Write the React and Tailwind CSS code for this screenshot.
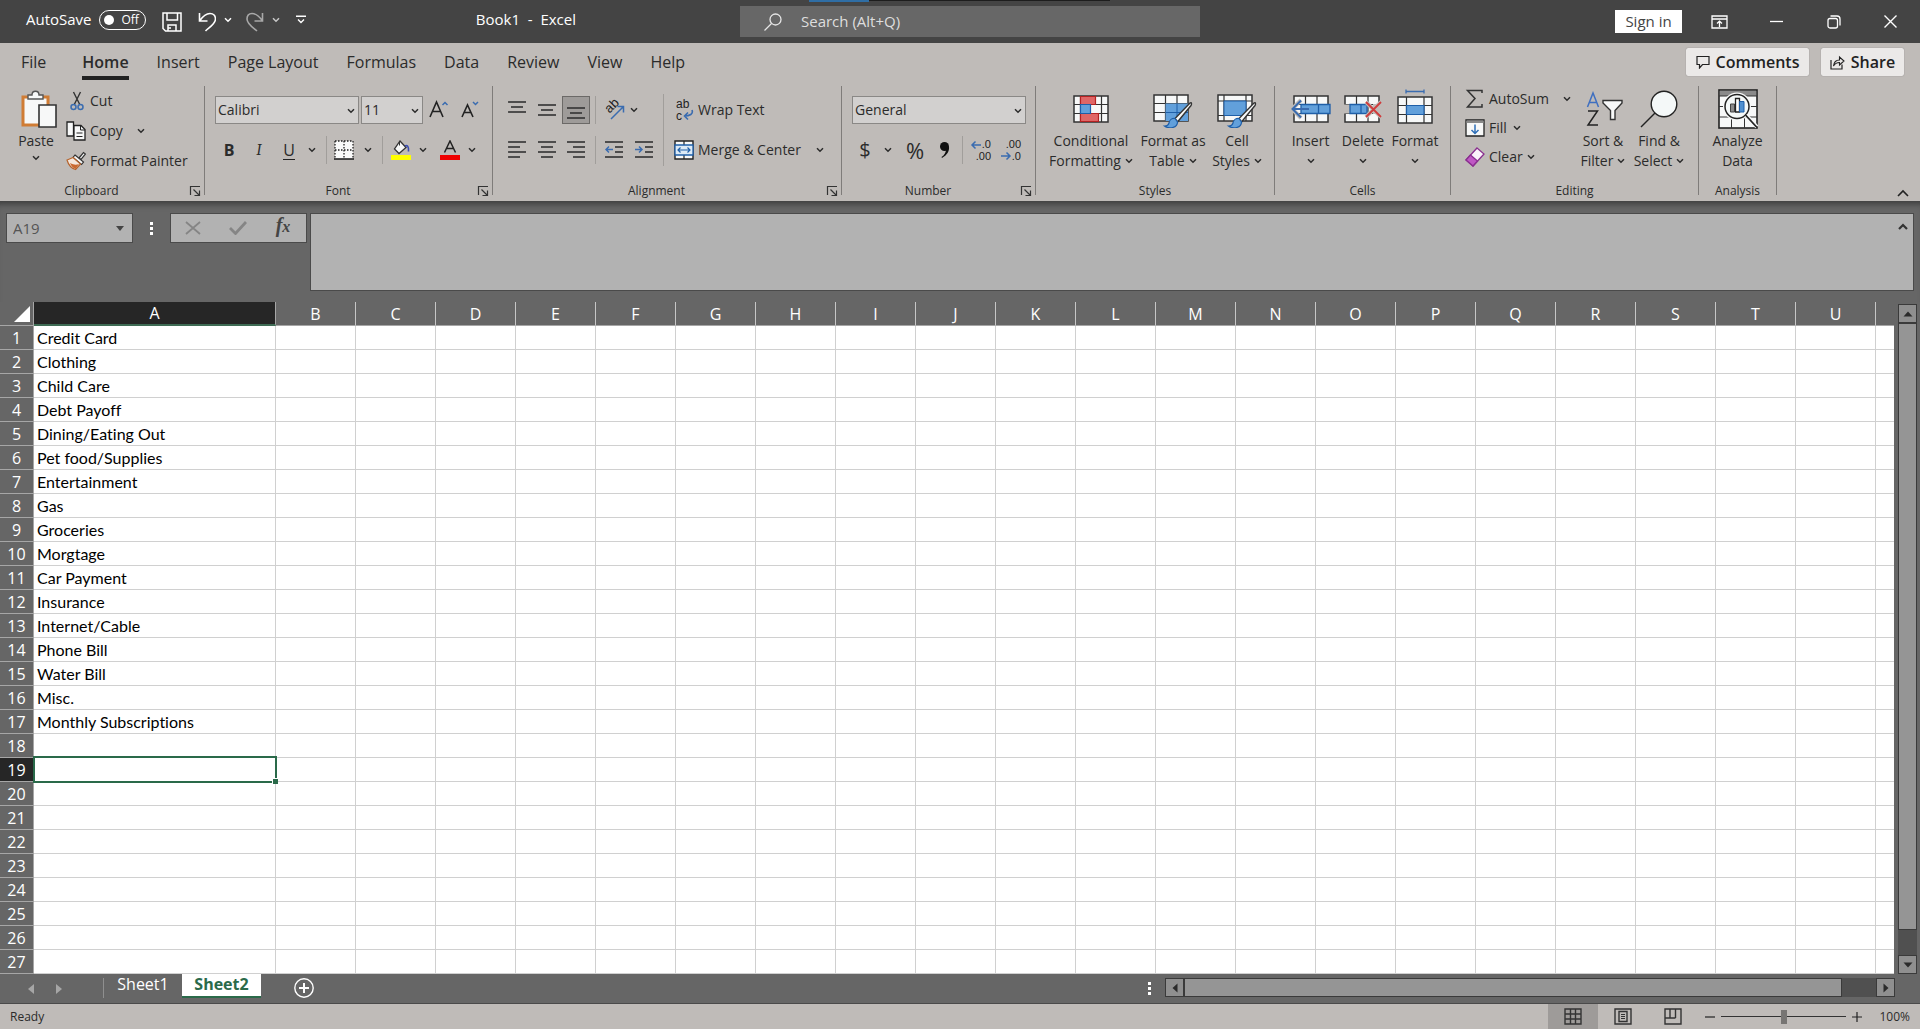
import React from "react";

const expenses = [
  "Credit Card", "Clothing", "Child Care", "Debt Payoff", "Dining/Eating Out", "Pet food/Supplies",
  "Entertainment", "Gas", "Groceries", "Morgtage", "Car Payment", "Insurance", "Internet/Cable",
  "Phone Bill", "Water Bill", "Misc.", "Monthly Subscriptions",
];
const columns = "BCDEFGHIJKLMNOPQRSTU".split("");
const rows = Array.from({ length: 27 }, (_, i) => i + 1);

function Svg({ w, h, children, className = "" }) {
  return (
    <svg width={w} height={h} viewBox={`0 0 ${w} ${h}`} fill="none" aria-hidden="true" className={`shrink-0 ${className}`}>
      {children}
    </svg>
  );
}

function Chevron({ className = "" }) {
  return (
    <Svg w={8} h={6} className={className}>
      <path d="M1 1.2 4 4.2 7 1.2" stroke="currentColor" strokeWidth="1.5" />
    </Svg>
  );
}

function IconButton({ label, className = "w-[30px]", children }) {
  return (
    <button type="button" aria-label={label} className={`flex h-7 shrink-0 items-center justify-center ${className}`}>
      {children}
    </button>
  );
}

function Separator({ className = "h-7" }) {
  return <div className={`w-px shrink-0 bg-[#a19e9b] ${className}`} />;
}

function Group({ name, launcher, width, children }) {
  return (
    <section aria-label={name} className={`flex shrink-0 ${width}`}>
      <div className="flex min-w-0 flex-1 flex-col">
        <div className="h-[95px]">{children}</div>
        <div className="flex h-5 items-center">
          <span className={`flex-1 text-center text-xs ${launcher ? "pr-1.5" : ""}`}>{name}</span>
          {launcher && (
            <button type="button" aria-label={`${name} settings`} className="mr-[3px] flex w-3 items-center">
              <Svg w={12} h={12}>
                <path d="M1.5 10V1.5H11M4.5 4.5l6 6M10.5 5.5v5h-5" stroke="#333" strokeWidth="1.2" />
              </Svg>
            </button>
          )}
        </div>
      </div>
      <div className="h-[109px] w-px bg-[#7f7c7a]" />
    </section>
  );
}

function BigButton({ icon, first, second, width, chevron = true }) {
  return (
    <button type="button" className={`flex shrink-0 flex-col items-center text-sm leading-5 ${width}`}>
      <span className="flex h-[45px] items-center justify-center">{icon}</span>
      <span className="whitespace-nowrap">{first}</span>
      <span className="flex h-5 items-center gap-1">
        {second}
        {chevron && <Chevron />}
      </span>
    </button>
  );
}

/* Horizontal text lines, each given as [x1, x2, y] */
function Lines({ lines, color = "#333" }) {
  return lines.map(([a, b, y]) => <path key={y} d={`M${a} ${y}H${b}`} stroke={color} strokeWidth="1.6" />);
}

const grid = (
  <>
    <rect x="1" y="1" width="34" height="26" fill="#f7f8f8" stroke="#333" strokeWidth="1.5" />
    <path d="M12.5 1v26M24 1v26M1 9.500h34M1 18.500h34" stroke="#333" strokeWidth="1.200" />
  </>
);

const brush = (
  <>
    <path d="M37 9 22 24.500l2.500 3.500L38 11.500c1-1.500.5-3.500-1-2.500Z" fill="#f7f8f8" stroke="#333" strokeWidth="1.4" />
    <path d="M22 24.500c-3-.5-5.500 1.500-6 4.500-.5 2-2 3-4.500 3 4 3 13 2.500 13-4Z" fill="#62a0db" stroke="#1f5fa8" strokeWidth="1.2" />
  </>
);

const conditionalIcon = (
  <Svg w={36} h={28}>
    <rect x="1" y="1" width="34" height="26" fill="#f7f8f8" stroke="#333" strokeWidth="1.500" />
    <path d="M7.500 1v26M28.500 1v26M1 9.500h34M1 18.500h34" stroke="#333" strokeWidth="1.200" />
    <path d="M7.500 1.500h15v8h-15zM7.500 18.500h18v8h-18z" fill="#e06666" stroke="#b32222" strokeWidth="1.2" />
    <path d="M7.500 9.500h10v9h-10z" fill="#62a0db" stroke="#1f5fa8" strokeWidth="1.2" />
  </Svg>
);
const tableStyleIcon = (
  <Svg w={40} h={34} className="mt-1">
    {grid}
    <path d="M12.500 9.500H35V27H12.500z" fill="#62a0db" />
    <path d="M12.500 18.500H35M24 9.500V27" stroke="#1f5fa8" />
    {brush}
  </Svg>
);
const cellStyleIcon = (
  <Svg w={40} h={34} className="mt-1">
    <rect x="1" y="1" width="34" height="26" fill="#f7f8f8" stroke="#333" strokeWidth="1.500" />
    <path d="M7 1v26M29 1v26M1 7h34M1 21.500h34" stroke="#333" strokeWidth="1.200" />
    <path d="M7 7h22v14.500H7z" fill="#62a0db" stroke="#1f5fa8" />
    {brush}
  </Svg>
);
const insertIcon = (
  <Svg w={40} h={28}>
    <g transform="translate(2)">{grid}</g>
    <path d="M10 9.500h29v9H10z" fill="#62a0db" stroke="#1f5fa8" strokeWidth="1.300" />
    <path d="M27.500 9.500v9" stroke="#1f5fa8" strokeWidth="1.300" />
    <path d="M10 5 1 14l9 9" stroke="#bfbbb8" strokeWidth="4" />
    <path d="M10 5.500 1.500 14l8.500 8.500M1.500 14H18" stroke="#3a6cb0" strokeWidth="2" />
  </Svg>
);
const deleteIcon = (
  <Svg w={38} h={28}>
    {grid}
    <path d="M0 9.500h6v9H0zM29 9h9v10h-9z" fill="#bfbbb8" />
    <path d="M6 9.500h17v9H6zM17 9.500v9" fill="#62a0db" stroke="#1f5fa8" strokeWidth="1.300" />
    <path d="m22 7 15 15M37 7 22 22" stroke="#bfbbb8" strokeWidth="4" />
    <path d="m22 7 15 15M37 7 22 22" stroke="#d03b3b" strokeWidth="1.800" />
  </Svg>
);
const formatIcon = (
  <Svg w={36} h={36} className="mb-1">
    <path d="M9 2.500h18M9 .5v4M27 .5v4" stroke="#3a6cb0" strokeWidth="1.300" />
    <g transform="translate(0 7)">
      <rect x="1" y="1" width="34" height="26" fill="#f7f8f8" stroke="#333" strokeWidth="1.500" />
      <path d="M9.500 1v26M27 1v26M1 9.500h34M1 18.500h34" stroke="#333" strokeWidth="1.200" />
      <path d="M9.500 9.500H27v9H9.500z" fill="#62a0db" stroke="#1f5fa8" strokeWidth="1.200" />
    </g>
  </Svg>
);
const sortIcon = (
  <Svg w={38} h={36} className="ml-1">
    <path d="M1.500 16 7 2l5.500 14M3.500 11.500h7" stroke="#3f6fc0" strokeWidth="1.500" />
    <path d="M2 20h9.500L2 34h10" stroke="#222" strokeWidth="1.500" />
    <path d="M17 9.500h19v2.500l-7 7.500v9h-4.500v-9L17 12z" fill="#f7f8f8" stroke="#333" strokeWidth="1.400" />
  </Svg>
);
const findIcon = (
  <Svg w={38} h={38}>
    <circle cx="24" cy="14" r="12.800" fill="#f4f8f8" stroke="#222" strokeWidth="1.400" />
    <path d="M15 23 1 37" stroke="#222" strokeWidth="1.500" />
  </Svg>
);
const analyzeIcon = (
  <Svg w={40} h={40}>
    <rect x="1" y="1" width="38" height="38" fill="#f7f8f8" stroke="#222" strokeWidth="1.600" />
    <path d="M2 2h36v5H2z" fill="#8a8a8a" />
    <path d="M1 7h38M1 17.500h38M1 28h38M13.500 28v11M26.500 28v11" stroke="#333" />
    <circle cx="19" cy="17.500" r="14" fill="#f7f8f8" />
    <circle cx="19" cy="17.500" r="12" fill="#f4f8f8" stroke="#222" strokeWidth="1.500" />
    <path d="M12.500 15h4v8h-4z" fill="#8a8a8a" stroke="#444" />
    <path d="M17.500 9.500h4V23h-4z" fill="#fff" stroke="#222" strokeWidth="1.300" />
    <path d="M21.500 12.500h4.500V23h-4.500z" fill="#4f8fd0" stroke="#1f5fa8" />
    <path d="m28 26 11 12" stroke="#f7f8f8" strokeWidth="4" />
    <path d="m27.500 26 11.500 12.500" stroke="#222" strokeWidth="1.800" />
  </Svg>
);

function TitleBar() {
  return (
    <header className="relative grid h-[43px] grid-cols-[740fr_460fr_720fr] items-center bg-[#444444] text-[15px] text-white">
      <div className="absolute inset-x-0 top-0 grid grid-cols-[809fr_60fr_241fr_810fr]" aria-hidden="true">
        <div className="col-start-2 h-0.5 bg-[#2f6ea5]" />
        <div className="h-px bg-[#1d1d1d]" />
      </div>
      <div className="flex h-full items-center pb-1 pl-[26px]">
        <label className="flex items-center gap-[7px]">
          AutoSave
          <input type="checkbox" role="switch" className="peer sr-only" />
          <span className="flex h-5 w-[47px] items-center gap-2 rounded-full border border-white pl-1 text-xs">
            <span className="size-2.5 rounded-full bg-white" />
            Off
          </span>
        </label>
        <button type="button" aria-label="Save" className="mt-1 ml-4">
          <Svg w={20} h={20}>
            <path d="M1 1h18v18H3.500L1 16.500zM5 1v7h10.500V1M6 19v-6h8v6M6 16h3" stroke="#fff" strokeWidth="1.500" />
          </Svg>
        </button>
        <button type="button" aria-label="Undo" className="mt-1 ml-4">
          <Svg w={18} h={20}>
            <path d="M1.500 1v8h8M1.500 9C5 4 8 1.500 12 1.500c3.500 0 5.500 2.500 5.500 5.500 0 5-6.500 8.500-10 12" stroke="#fff" strokeWidth="1.600" />
          </Svg>
        </button>
        <button type="button" aria-label="Undo history" className="ml-2"><Chevron /></button>
        <button type="button" aria-label="Redo" className="mt-1 ml-3.5 text-[#a8a8a8]">
          <Svg w={18} h={20}>
            <path d="M16.500 1v8h-8M16.500 9C13 4 10 1.500 6 1.500 2.500 1.500 1 4 1 7c0 5 6 8.500 10 12" stroke="currentColor" strokeWidth="1.600" />
          </Svg>
        </button>
        <button type="button" aria-label="Redo history" className="ml-2 text-[#c8c8c8]"><Chevron /></button>
        <button type="button" aria-label="Customize toolbar" className="ml-4">
          <Svg w={10} h={9}>
            <path d="M0 1.200h10M2 4.500l3 3 3-3" stroke="#fff" strokeWidth="1.400" />
          </Svg>
        </button>
        <h1 className="mr-[164px] ml-auto whitespace-pre">Book1  -  Excel</h1>
      </div>
      <label className="flex h-[31px] items-center bg-[#676767] pl-6">
        <Svg w={18} h={18}>
          <circle cx="11.500" cy="6.500" r="5.500" stroke="#e6e6e6" strokeWidth="1.300" />
          <path d="M7.500 10.500.5 17.500" stroke="#e6e6e6" strokeWidth="1.300" />
        </Svg>
        <input aria-label="Search" placeholder="Search (Alt+Q)" className="ml-[19px] min-w-0 flex-1 bg-transparent placeholder:text-[#dedede] focus:outline-none" />
      </label>
      <div className="flex items-center justify-end pr-[23px]">
        <button type="button" className="h-[23px] w-[67px] bg-white text-[#444444]">Sign in</button>
        <button type="button" aria-label="Ribbon display options" className="ml-[29px]">
          <Svg w={17} h={14}>
            <path d="M1 1h15v12H1zM1 4h15" stroke="#fff" strokeWidth="1.300" />
            <path d="M8.500 12V6.500M6 8.500l2.500-2.300L11 8.500" stroke="#fff" strokeWidth="1.300" />
          </Svg>
        </button>
        <button type="button" aria-label="Minimize" className="ml-[42px]">
          <Svg w={13} h={13}><path d="M0 6.500h13" stroke="#fff" strokeWidth="1.300" /></Svg>
        </button>
        <button type="button" aria-label="Restore" className="ml-11">
          <Svg w={14} h={14}>
            <rect x="1" y="3.500" width="9.500" height="9.500" rx="2" stroke="#fff" strokeWidth="1.300" />
            <path d="M3.500 1h6.500a3 3 0 0 1 3 3v6.500" stroke="#fff" strokeWidth="1.300" />
          </Svg>
        </button>
        <button type="button" aria-label="Close" className="ml-[43px]">
          <Svg w={13} h={13}><path d="m.5.5 12 12M12.500.5l-12 12" stroke="#fff" strokeWidth="1.400" /></Svg>
        </button>
      </div>
    </header>
  );
}

const tabs = ["Home", "Insert", "Page Layout", "Formulas", "Data", "Review", "View", "Help"];

function RibbonTabs() {
  return (
    <div className="flex h-[43px] items-start pr-4 pl-[21px]">
      <nav className="mt-[7px] flex items-start gap-7 text-base leading-6">
        <button type="button" className="mr-2">File</button>
        {tabs.map((tab) => (
          <button
            key={tab}
            type="button"
            className={tab === "Home" ? "border-b-4 border-[#222] pb-0.5 font-semibold" : ""}
          >
            {tab}
          </button>
        ))}
      </nav>
      <div className="mt-[5px] ml-auto flex gap-3 text-base font-semibold text-[#222]">
        <button type="button" className="flex h-7 w-[123px] items-center justify-center gap-1.5 rounded-xs bg-[#ebe9e8] shadow-[0_0_1px_#666]">
          <Svg w={14} h={14}>
            <path d="M1 1.500h12v8H6.500L3.500 13V9.500H1z" stroke="#222" strokeWidth="1.200" />
          </Svg>
          Comments
        </button>
        <button type="button" className="flex h-7 w-[83px] items-center justify-center gap-1.5 rounded-xs bg-[#ebe9e8] shadow-[0_0_1px_#666]">
          <Svg w={15} h={15}>
            <path d="M1 5v9h11V9.500" stroke="#222" strokeWidth="1.200" />
            <path d="M3.500 11C4 7 6 5 9.500 5V2l4.500 4-4.500 4V7.500C7 7.500 5 8.500 3.500 11Z" stroke="#222" strokeWidth="1.100" />
          </Svg>
          Share
        </button>
      </div>
    </div>
  );
}

function Combo({ label, value, width }) {
  return (
    <div className={`relative ${width}`}>
      <select aria-label={label} className="h-7 w-full appearance-none border border-[#8a8886] bg-[#d2d0cf] pl-0.5 text-sm">
        <option>{value}</option>
      </select>
      <Chevron className="pointer-events-none absolute top-3 right-1" />
    </div>
  );
}

function Clipboard() {
  return (
    <Group name="Clipboard" launcher width="w-[205px]">
      <div className="flex">
        <button type="button" className="ml-[15px] flex w-[42px] flex-col items-center text-sm leading-5">
          <Svg w={36} h={38} className="mt-1 mb-[3px] ml-1.5">
            <path d="M2 7h25v28H2z" fill="#f7f8f8" stroke="#d07c34" strokeWidth="3" />
            <path d="M7 9V5h4c0-5 7-5 7 0h4v4z" fill="#f7f8f8" stroke="#555" strokeWidth="1.400" />
            <path d="M18 15h17v22H18z" fill="#f7f8f8" stroke="#333" strokeWidth="1.600" />
          </Svg>
          Paste
          <Chevron className="mt-1" />
        </button>
        <div className="ml-[9px] flex flex-col text-sm">
          <button type="button" className="flex h-[30px] items-center gap-1.5 pl-1">
            <Svg w={14} h={20}>
              <path d="M3.500 1 10 14M10.500 1 4 14" stroke="#333" strokeWidth="1.400" />
              <circle cx="3.500" cy="16" r="2.500" stroke="#3a6cb0" strokeWidth="1.500" />
              <circle cx="10.500" cy="16" r="2.500" stroke="#3a6cb0" strokeWidth="1.500" />
            </Svg>
            Cut
          </button>
          <button type="button" className="flex h-[30px] items-center gap-1">
            <Svg w={20} h={20}>
              <path d="M1 1h6.500v14H1z" fill="#f7f8f8" stroke="#222" strokeWidth="1.300" />
              <path d="M8 4.500h7l4 4V19H8z" fill="#f7f8f8" stroke="#222" strokeWidth="1.300" />
              <path d="M14.500 4.500v4.500H19M10.500 12h6M10.500 15.500h6" stroke="#222" />
            </Svg>
            Copy
            <Chevron className="ml-2.5" />
          </button>
          <button type="button" className="flex h-[30px] items-center gap-1 whitespace-nowrap">
            <Svg w={20} h={20}>
              <path d="m13 7 4.500-5.500 2 1.500-4.500 5.500z" fill="#f7f8f8" stroke="#333" strokeWidth="1.200" />
              <path d="m9 4 8.500 7-2 2.500-8.500-7z" fill="#f7f8f8" stroke="#333" strokeWidth="1.200" />
              <path d="M7 6.500 1 9c1.500 5 5 8.500 8.500 9.500L14.500 13z" fill="#f4e7dc" stroke="#b5622b" strokeWidth="1.200" />
              <path d="M4 12c4 2 6 2 9 1l-3.500 5C7 17 5 15 4 12Z" fill="#c9682f" />
            </Svg>
            Format Painter
          </button>
        </div>
      </div>
    </Group>
  );
}

function FontGroup() {
  return (
    <Group name="Font" launcher width="w-[288px]">
      <div className="flex items-center pt-2.5 pl-2.5">
        <Combo label="Font" value="Calibri" width="w-36" />
        <Combo label="Font size" value="11" width="ml-0.5 w-[62px]" />
        <IconButton label="Increase font size" className="ml-0.5 w-7">
          <Svg w={20} h={20}>
            <path d="M1 17 7.500 2 14 17M3.500 11.500h8" stroke="#222" strokeWidth="1.600" />
            <path d="m13.500 5 2.500-2.500L18.500 5" stroke="#3a6cb0" strokeWidth="1.500" />
          </Svg>
        </IconButton>
        <IconButton label="Decrease font size" className="ml-0.5 w-[30px]">
          <Svg w={20} h={20}>
            <path d="M2 17 7.500 5 13 17M4 12.500h7" stroke="#222" strokeWidth="1.600" />
            <path d="m13 2 2.500 2.500L18 2" stroke="#3a6cb0" strokeWidth="1.500" />
          </Svg>
        </IconButton>
      </div>
      <div className="flex items-center pt-3 pl-[9px]">
        <IconButton label="Bold"><span className="text-base font-bold">B</span></IconButton>
        <IconButton label="Italic"><span className="font-serif text-base italic">I</span></IconButton>
        <IconButton label="Underline"><span className="border-b border-[#222] text-base leading-[18px]">U</span></IconButton>
        <IconButton label="Underline styles" className="w-4"><Chevron /></IconButton>
        <Separator className="ml-1.5 h-7" />
        <IconButton label="Borders" className="ml-[5px] w-6">
          <Svg w={20} h={20}>
            <path d="M1 1h18v18H1z" fill="#fafafa" />
            <path d="M1 1h18M1 10h18M1 1v17M10 1v17M19 1v17" stroke="#222" strokeWidth="1.300" strokeDasharray="1.500 1.500" />
            <path d="M0 19h20" stroke="#222" strokeWidth="1.600" />
          </Svg>
        </IconButton>
        <IconButton label="Border styles" className="ml-0.5 w-5"><Chevron /></IconButton>
        <Separator className="ml-1 h-7" />
        <IconButton label="Fill color" className="ml-1.5 w-6">
          <Svg w={20} h={20}>
            <path d="m9 1 6 6.500-7 6L3.500 9z" fill="#f7f8f8" stroke="#333" strokeWidth="1.300" />
            <path d="M8.500 5.500V1" stroke="#333" />
            <path d="M14 6c2-1 4 0 3.500 5.500" stroke="#3a4cb0" strokeWidth="1.600" />
            <path d="M0 15h20v5H0z" fill="#ffff00" />
          </Svg>
        </IconButton>
        <IconButton label="Fill colors" className="w-5"><Chevron /></IconButton>
        <IconButton label="Font color" className="ml-[5px] w-6">
          <Svg w={20} h={20}>
            <path d="M4.500 12.500 10 1l5.500 11.500M6.500 8.500h7" stroke="#222" strokeWidth="1.500" />
            <path d="M0 15h20v5H0z" fill="#f00000" />
          </Svg>
        </IconButton>
        <IconButton label="Font colors" className="w-5"><Chevron /></IconButton>
      </div>
    </Group>
  );
}

function Alignment() {
  return (
    <Group name="Alignment" launcher width="w-[349px]">
      <div className="flex">
        <div className="flex flex-col gap-3 pt-2.5 pl-[9px]">
          <div className="flex items-center">
            <IconButton label="Top align">
              <Svg w={18} h={18}><Lines lines={[[0, 18, 1], [3, 15, 6], [0, 18, 11]]} /></Svg>
            </IconButton>
            <IconButton label="Middle align">
              <Svg w={18} h={18}><Lines lines={[[0, 18, 4], [3, 15, 9], [0, 18, 14]]} /></Svg>
            </IconButton>
            <IconButton label="Bottom align" className="w-[28px] border border-[#6b6967] bg-[#9e9b99]">
              <Svg w={18} h={18}><Lines lines={[[0, 18, 7], [3, 15, 12], [0, 18, 17]]} /></Svg>
            </IconButton>
            <Separator className="ml-[5px] h-7" />
            <IconButton label="Orientation" className="ml-1.5 w-6">
              <Svg w={24} h={28}>
                <text x="-5" y="3" transform="translate(9 12) rotate(-45)" fontSize="13" fontFamily="Liberation Sans" fill="#222">ab</text>
                <path d="M9 23 21 11M15.500 10.500H21.500v6" stroke="#3a6cb0" strokeWidth="1.500" />
              </Svg>
            </IconButton>
            <IconButton label="Orientation options" className="w-4"><Chevron /></IconButton>
          </div>
          <div className="flex items-center">
            <IconButton label="Align left">
              <Svg w={18} h={18}><Lines lines={[[0, 18, 1], [0, 12, 6], [0, 18, 11], [0, 12, 16]]} /></Svg>
            </IconButton>
            <IconButton label="Center">
              <Svg w={18} h={18}><Lines lines={[[0, 18, 1], [3, 15, 6], [0, 18, 11], [3, 15, 16]]} /></Svg>
            </IconButton>
            <IconButton label="Align right" className="w-[28px]">
              <Svg w={18} h={18}><Lines lines={[[0, 18, 1], [6, 18, 6], [0, 18, 11], [6, 18, 16]]} /></Svg>
            </IconButton>
            <Separator className="ml-[5px] h-7" />
            <IconButton label="Decrease indent" className="ml-[3px] w-[30px]">
              <Svg w={18} h={18}>
                <Lines lines={[[0, 18, 1], [10, 18, 6], [10, 18, 11], [0, 18, 16]]} />
                <path d="M8 8.500H1M4 5.500l-3 3 3 3" stroke="#3a6cb0" strokeWidth="1.500" />
              </Svg>
            </IconButton>
            <IconButton label="Increase indent">
              <Svg w={18} h={18}>
                <Lines lines={[[0, 18, 1], [10, 18, 6], [10, 18, 11], [0, 18, 16]]} />
                <path d="M0 8.500h7M4 5.500l3 3-3 3" stroke="#3a6cb0" strokeWidth="1.500" />
              </Svg>
            </IconButton>
          </div>
        </div>
        <Separator className="mt-2 ml-1 h-[72px]" />
        <div className="flex flex-col gap-3 pt-2.5 pl-2.5 text-sm">
          <button type="button" className="flex h-7 items-center gap-1">
            <Svg w={20} h={28}>
              <text x="2" y="12" fontSize="12" fontFamily="Liberation Sans" fill="#222">ab</text>
              <text x="2" y="24" fontSize="12" fontFamily="Liberation Sans" fill="#222">c</text>
              <path d="M18 14c1.500 4-2 6-8 6M14 16.500 10.500 20l3.500 3.500" stroke="#3a6cb0" strokeWidth="1.600" />
            </Svg>
            Wrap Text
          </button>
          <div className="flex h-7 items-center">
            <button type="button" className="flex w-[134px] items-center gap-1 whitespace-nowrap">
              <Svg w={20} h={20}>
                <path d="M1 1h18v18H1z" fill="#f7f8f8" stroke="#222" strokeWidth="1.400" />
                <path d="M10 1v4M10 15v4" stroke="#222" strokeWidth="1.200" />
                <path d="M1 5h18v10H1z" fill="#dceaf6" stroke="#1f5fa8" strokeWidth="1.300" />
                <path d="M4 10h12M6.500 7.500 4 10l2.500 2.500M13.500 7.500 16 10l-2.500 2.500" stroke="#1f5fa8" strokeWidth="1.200" />
              </Svg>
              Merge &amp; Center
            </button>
            <button type="button" aria-label="Merge options" className="ml-2"><Chevron /></button>
          </div>
        </div>
      </div>
    </Group>
  );
}

function NumberGroup() {
  return (
    <Group name="Number" launcher width="w-[194px]">
      <div className="flex pt-2.5 pl-2.5">
        <Combo label="Number format" value="General" width="w-[174px]" />
      </div>
      <div className="flex items-center pt-3 pl-2">
        <IconButton label="Currency"><span className="text-xl">$</span></IconButton>
        <IconButton label="Currency options" className="w-4"><Chevron /></IconButton>
        <IconButton label="Percent" className="ml-1 w-[30px]"><span className="text-[22px] leading-7">%</span></IconButton>
        <IconButton label="Comma style">
          <Svg w={12} h={18}>
            <circle cx="5.500" cy="5.500" r="4.500" fill="#111" />
            <path d="M10 5.500c.5 5-2 8.500-7 11.500l-.5-1c3-2 4.500-4.500 4.500-8z" fill="#111" />
          </Svg>
        </IconButton>
        <Separator className="ml-0.5 h-7" />
        <IconButton label="Increase decimal" className="ml-[3px] w-[30px]">
          <Svg w={22} h={28}>
            <path d="M11 9H2M5.500 5.500 2 9l3.500 3.500" stroke="#3a6cb0" strokeWidth="1.500" />
            <text x="21" y="12" textAnchor="end" fontSize="11" fontFamily="Liberation Sans" fill="#222">.0</text>
            <text x="21" y="24" textAnchor="end" fontSize="11" fontFamily="Liberation Sans" fill="#222">.00</text>
          </Svg>
        </IconButton>
        <IconButton label="Decrease decimal">
          <Svg w={22} h={28}>
            <path d="M1 20h9M6.500 16.500 10 20l-3.500 3.500" stroke="#3a6cb0" strokeWidth="1.500" />
            <text x="21" y="12" textAnchor="end" fontSize="11" fontFamily="Liberation Sans" fill="#222">.00</text>
            <text x="21" y="24" textAnchor="end" fontSize="11" fontFamily="Liberation Sans" fill="#222">.0</text>
          </Svg>
        </IconButton>
      </div>
    </Group>
  );
}

function Editing() {
  return (
    <Group name="Editing" width="w-[248px]">
      <div className="flex">
        <div className="flex w-[124px] flex-col pr-1 pl-3.5 text-sm">
          <button type="button" className="flex h-[27px] items-center pb-0.5">
            <Svg w={20} h={20} className="mr-1">
              <path d="M17 4V1.500H2.500l7.500 8-7.500 8.500H17V15" stroke="#333" strokeWidth="1.500" />
            </Svg>
            AutoSum
            <Chevron className="ml-auto" />
          </button>
          <button type="button" className="flex h-[30px] items-center">
            <Svg w={20} h={18} className="mr-1">
              <path d="M1 1h18v16H1z" fill="#f7f8f8" stroke="#222" strokeWidth="1.300" />
              <path d="M1.500 1.500h17v2.500h-17z" fill="#8a8a8a" />
              <path d="M10 5.500v9M6.500 11l3.500 3.500 3.500-3.500" stroke="#2f6fb8" strokeWidth="1.500" />
            </Svg>
            Fill
            <Chevron className="ml-1.5" />
          </button>
          <button type="button" className="flex h-7 items-center">
            <Svg w={20} h={20} className="mr-1">
              <path d="m12 1 7 6L8 19l-7-6z" fill="#faf4fa" stroke="#8a2f8f" strokeWidth="1.300" />
              <path d="m5.500 8 7 6L8 19l-7-6z" fill="#bf58c4" stroke="#8a2f8f" strokeWidth="1.300" />
            </Svg>
            Clear
            <Chevron className="ml-1" />
          </button>
        </div>
        <BigButton icon={sortIcon} first="Sort &" second="Filter" width="w-[56px]" />
        <BigButton icon={findIcon} first="Find &" second="Select" width="w-[56px]" />
      </div>
    </Group>
  );
}

function Ribbon() {
  return (
    <div className="bg-[#bfbbb8] text-[#2b2b2b]">
      <RibbonTabs />
      <div className="flex h-[115px]">
        <Clipboard />
        <FontGroup />
        <Alignment />
        <NumberGroup />
        <Group name="Styles" width="w-[239px]">
          <div className="flex pl-2.5">
            <BigButton icon={conditionalIcon} first="Conditional" second="Formatting" width="w-[90px]" />
            <BigButton icon={tableStyleIcon} first="Format as" second="Table" width="w-[74px]" />
            <BigButton icon={cellStyleIcon} first="Cell" second="Styles" width="w-[54px]" />
          </div>
        </Group>
        <Group name="Cells" width="w-[176px]">
          <div className="flex pl-[9px]">
            <BigButton icon={insertIcon} first="Insert" width="w-[53px]" />
            <BigButton icon={deleteIcon} first="Delete" width="w-[52px]" />
            <BigButton icon={formatIcon} first="Format" width="w-[52px]" />
          </div>
        </Group>
        <Editing />
        <Group name="Analysis" width="w-[78px]">
          <div className="flex justify-center">
            <BigButton icon={analyzeIcon} first="Analyze" second="Data" width="w-[60px]" chevron={false} />
          </div>
        </Group>
        <button type="button" aria-label="Collapse the ribbon" className="mr-[11px] mb-1 ml-auto self-end">
          <Svg w={12} h={8}><path d="m1 7 5-5 5 5" stroke="#222" strokeWidth="1.600" /></Svg>
        </button>
      </div>
    </div>
  );
}

function Dots() {
  return (
    <div className="flex flex-col gap-0.5" aria-hidden="true">
      <div className="size-[3px] bg-white" />
      <div className="size-[3px] bg-white" />
      <div className="size-[3px] bg-white" />
    </div>
  );
}

function FormulaBar() {
  return (
    <div className="flex h-[101px] items-start pt-3 pr-1.5 pl-1.5 shadow-[inset_0_8px_6px_-5px_#3c3c3c]">
      <div className="flex h-[30px] w-[127px] items-center border border-[#4a4a4a] bg-[#b2b2b2] pr-2 pl-1.5">
        <input aria-label="Name box" defaultValue="A19" className="min-w-0 flex-1 bg-transparent text-[15px] leading-5 text-[#555] focus:outline-none" />
        <Svg w={8} h={5}><path d="M0 0h8L4 5z" fill="#444" /></Svg>
      </div>
      <div className="flex h-[30px] w-[37px] items-center justify-center"><Dots /></div>
      <div className="flex h-[30px] w-[137px] items-center border border-[#4a4a4a] bg-[#b2b2b2]">
        <IconButton label="Cancel" className="w-11">
          <Svg w={16} h={14}><path d="m1 1 14 12M15 1 1 13" stroke="#858585" strokeWidth="1.800" /></Svg>
        </IconButton>
        <IconButton label="Enter" className="w-[46px]">
          <Svg w={18} h={14}><path d="m1 7 5.500 5.500L17 1" stroke="#858585" strokeWidth="2.800" /></Svg>
        </IconButton>
        <IconButton label="Insert function" className="w-11">
          <span className="pb-1 font-['Liberation_Serif',serif] text-xl leading-6 font-bold text-[#444] italic">f<span className="text-base">x</span></span>
        </IconButton>
      </div>
      <div className="relative ml-[3px] h-[78px] min-w-0 flex-1">
        <textarea aria-label="Formula" className="block size-full resize-none border border-[#4a4a4a] bg-[#b2b2b2] p-1 text-sm focus:outline-none" />
        <button type="button" aria-label="Collapse formula bar" className="absolute top-2.5 right-1.5 flex">
          <Svg w={10} h={7}><path d="m1 6 4-4 4 4" stroke="#333" strokeWidth="2.200" /></Svg>
        </button>
      </div>
    </div>
  );
}

function Sheet() {
  return (
    <table className="w-full table-fixed border-separate border-spacing-0 text-base leading-5">
      <colgroup>
        <col className="w-[34px]" />
        <col className="w-[242px]" />
        {columns.map((c) => <col key={c} className="w-20" />)}
        <col />
      </colgroup>
      <thead>
        <tr className="h-6 text-white">
          <th aria-label="Select all" className="border-r border-b border-[#a6a6a6] p-0">
            <Svg w={16} h={16} className="ml-3.5"><path d="M16 0v16H0z" fill="#fff" /></Svg>
          </th>
          <th className="border-r border-b-2 border-r-[#a6a6a6] border-b-[#3e6b54] bg-[#262626] p-0 font-normal">A</th>
          {columns.map((c) => (
            <th key={c} className="border-r border-b border-r-[#c6c6c6] border-b-[#a6a6a6] p-0 font-normal">{c}</th>
          ))}
          <th aria-label="V" className="border-b border-[#a6a6a6] p-0" />
        </tr>
      </thead>
      <tbody>
        {rows.map((n) => (
          <tr key={n} className="h-6">
            <th className={`border-r border-b border-[#a6a6a6] p-0 font-normal text-white ${n === 19 ? "bg-[#262626]" : ""}`}>{n}</th>
            <td className="relative border-r border-b border-[#d0d0d0] bg-white p-0 pl-[3px] font-['Lato',sans-serif] text-base leading-5 text-black [font-variant-ligatures:none]">
              {expenses[n - 1]}
              {n === 19 && (
                <>
                  <div className="absolute -top-0.5 -right-0.5 -bottom-0.5 -left-px z-10 border-2 border-[#2a6a4a]" />
                  <div className="absolute -right-[3px] -bottom-[3px] z-20 size-1.5 border-t border-l border-white bg-[#2a6a4a]" />
                </>
              )}
            </td>
            {columns.map((c) => <td key={c} className="border-r border-b border-[#d0d0d0] bg-white p-0" />)}
            <td className="border-b border-[#d0d0d0] bg-white p-0" />
          </tr>
        ))}
      </tbody>
    </table>
  );
}

function Arrow({ d }) {
  return <Svg w={10} h={10}><path d={d} fill="#2b2b2b" /></Svg>;
}

function VerticalScroll() {
  return (
    <div className="mt-0.5 ml-1 flex w-[19px] flex-col bg-[#505050]">
      <button type="button" aria-label="Scroll up" className="flex h-[19px] items-center justify-center border border-[#3a3a3a] bg-[#8f8f8f]">
        <Arrow d="M5 2.500 9.500 7.500h-9z" />
      </button>
      <div className="flex-[95] border border-[#3a3a3a] bg-[#959595]" />
      <div className="flex-[4]" />
      <button type="button" aria-label="Scroll down" className="flex h-[19px] items-center justify-center border border-[#3a3a3a] bg-[#8f8f8f]">
        <Arrow d="M5 7.500.5 2.500h9z" />
      </button>
    </div>
  );
}

function SheetTabs() {
  return (
    <div className="flex h-[29px] shrink-0 items-start text-base text-white">
      <div className="flex h-[29px] w-[103px] items-center gap-[22px] pl-7">
        <button type="button" aria-label="Previous sheet"><Svg w={6} h={10}><path d="M6 0v10L0 5z" fill="#a6a6a6" /></Svg></button>
        <button type="button" aria-label="Next sheet"><Svg w={6} h={10}><path d="M0 0v10l6-5z" fill="#a6a6a6" /></Svg></button>
      </div>
      <div className="mt-1 h-5 w-px bg-[#8f8f8f]" />
      <button type="button" className="h-5 w-[78px] leading-5">Sheet1</button>
      <button type="button" className="h-6 w-[79px] border-b-2 border-[#2a6a4a] bg-white pb-0.5 leading-5 font-bold text-[#2a6a4a]">Sheet2</button>
      <button type="button" aria-label="New sheet" className="mt-1 ml-[33px]">
        <Svg w={20} h={20}>
          <circle cx="10" cy="10" r="9.200" stroke="#fff" strokeWidth="1.400" />
          <path d="M10 5v10M5 10h10" stroke="#fff" strokeWidth="2" />
        </Svg>
      </button>
      <div className="mt-2 mr-[14px] ml-auto"><Dots /></div>
      <div className="mt-1 mr-[25px] flex h-[19px] w-[38%] bg-[#505050]">
        <button type="button" aria-label="Scroll left" className="flex w-[19px] items-center justify-center border border-[#3a3a3a] bg-[#8f8f8f]">
          <Arrow d="M7.500.5v9L2.500 5z" />
        </button>
        <div className="flex-[95] border border-[#3a3a3a] bg-[#959595]" />
        <div className="flex-[5]" />
        <button type="button" aria-label="Scroll right" className="flex w-[19px] items-center justify-center border border-[#3a3a3a] bg-[#8f8f8f]">
          <Arrow d="M2.500.5v9l5-4.500z" />
        </button>
      </div>
    </div>
  );
}

function StatusBar() {
  return (
    <footer className="flex h-[26px] shrink-0 items-center border-t border-[#4a4a4a] bg-[#bfbbb8] pr-2.5 pl-2.5 text-xs text-[#2b2b2b]">
      <span className="mr-auto">Ready</span>
      <button type="button" aria-label="Normal view" className="flex h-full w-[50px] items-center justify-center bg-[#9e9b99]">
        <Svg w={18} h={17}><path d="M1 1h16v15H1zM6.500 1v15M11.500 1v15M1 6h16M1 11h16" stroke="#333" strokeWidth="1.400" /></Svg>
      </button>
      <button type="button" aria-label="Page layout view" className="flex w-[50px] justify-center">
        <Svg w={18} h={17}>
          <path d="M1 1h16v15H1zM5 3.500h8v10H5z" stroke="#333" strokeWidth="1.400" />
          <path d="M7 6.500h4M7 8.500h4M7 10.500h4" stroke="#333" />
        </Svg>
      </button>
      <button type="button" aria-label="Page break view" className="flex w-[50px] justify-center">
        <Svg w={18} h={17}><path d="M1 1h16v15H1zM6 1v9M11.500 1v9M1 10h10.500" stroke="#333" strokeWidth="1.400" /></Svg>
      </button>
      <button type="button" aria-label="Zoom out" className="ml-[7px]">
        <Svg w={10} h={10}><path d="M0 5h10" stroke="#222" strokeWidth="1.200" /></Svg>
      </button>
      <label className="relative mx-1.5 flex h-4 w-[125px] items-center justify-center">
        <input type="range" aria-label="Zoom" min="0" max="200" defaultValue="100" className="absolute inset-0 w-full opacity-0" />
        <span className="h-px w-full bg-[#333]" />
        <span className="absolute h-3.5 w-1.5 bg-[#777573]" />
      </label>
      <button type="button" aria-label="Zoom in">
        <Svg w={10} h={10}><path d="M0 5h10M5 0v10" stroke="#222" strokeWidth="1.200" /></Svg>
      </button>
      <span className="ml-[17px]">100%</span>
    </footer>
  );
}

export default function App() {
  return (
    <div className="flex min-h-screen flex-col bg-[#666666] font-['Open_Sans','Noto_Sans',sans-serif]">
      <TitleBar />
      <Ribbon />
      <FormulaBar />
      <main className="flex flex-1">
        <div className="min-w-0 flex-1"><Sheet /></div>
        <VerticalScroll />
        <div className="w-[3px]" />
      </main>
      <SheetTabs />
      <StatusBar />
    </div>
  );
}
